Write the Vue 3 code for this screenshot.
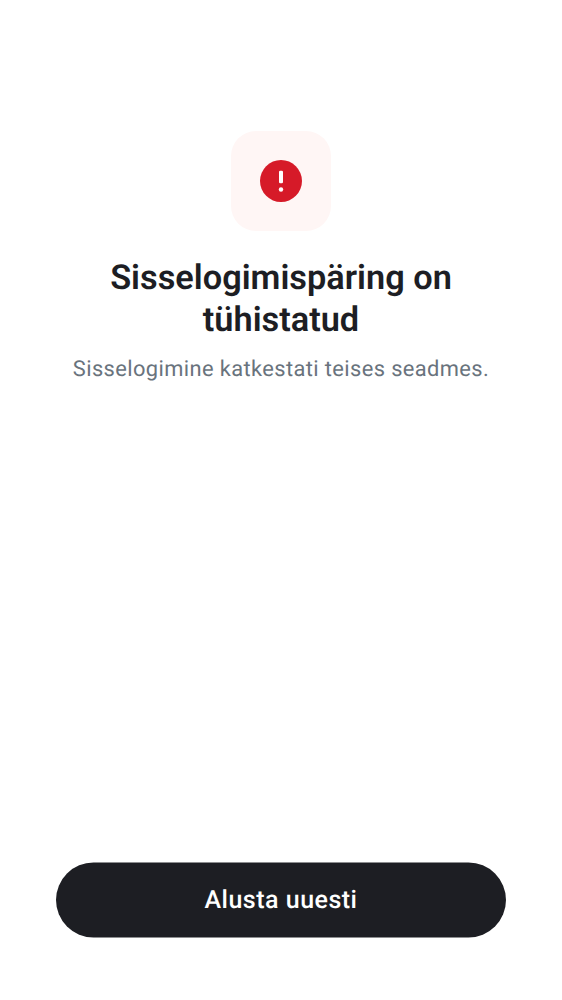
<script setup>
</script>

<template>
  <main class="screen">
    <section class="message">
      <div class="badge">
        <svg class="alert" viewBox="0 0 42 42" aria-hidden="true">
          <circle cx="21" cy="21" r="21" fill="#d61a28" />
          <rect x="19" y="10.8" width="4" height="12.4" rx="1.3" fill="#fff" />
          <circle cx="21" cy="29.5" r="2.2" fill="#fff" />
        </svg>
      </div>
      <h1>Sisselogimispäring on tühistatud</h1>
      <p>Sisselogimine katkestati teises seadmes.</p>
    </section>
    <button class="restart" type="button">Alusta uuesti</button>
  </main>
</template>

<style scoped>
.screen {
  box-sizing: border-box;
  height: 1000px;
  padding: 131px 56px 62px;
  display: flex;
  flex-direction: column;
  justify-content: space-between;
  background: #fff;
  font-family: Roboto, sans-serif;
  text-rendering: geometricPrecision;
}
.message {
  display: flex;
  flex-direction: column;
  align-items: center;
  text-align: center;
}
.badge {
  width: 100px;
  height: 100px;
  border-radius: 25px;
  background: #fff6f5;
  display: flex;
  align-items: center;
  justify-content: center;
}
.alert {
  width: 42px;
  height: 42px;
}
h1 {
  width: 400px;
  margin: 26px 0 0;
  font-size: 34.35px;
  line-height: 42px;
  font-weight: 600;
  color: #1d1e24;
}
p {
  margin: 14px 0 0;
  font-size: 21.86px;
  line-height: 30px;
  letter-spacing: 0.39px;
  white-space: nowrap;
  color: #69737d;
}
.restart {
  height: 75px;
  border: 0;
  border-radius: 37.5px;
  background: #1d1e23;
  color: #fff;
  font-family: inherit;
  font-size: 25px;
  font-weight: 500;
  letter-spacing: 0.5px;
  text-rendering: geometricPrecision;
  transform: translateY(-0.5px);
}
</style>

<style>
body {
  background: #fff;
}
</style>
